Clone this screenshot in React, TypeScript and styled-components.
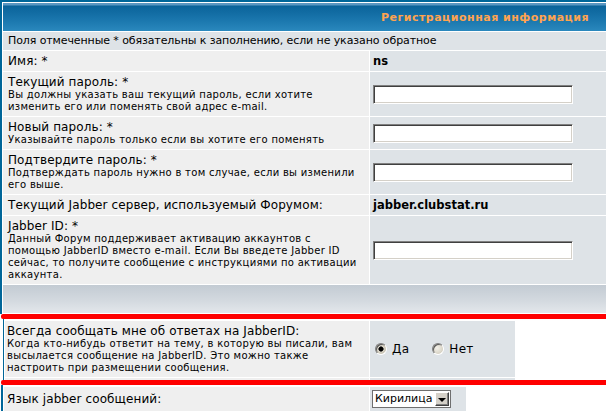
import styled, { createGlobalStyle } from 'styled-components';

const GlobalStyle = createGlobalStyle`
  html, body {
    margin: 0;
    padding: 0;
    background: #ffffff;
  }
  body {
    font-family: "DejaVu Sans", Verdana, sans-serif;
    color: #000000;
    overflow: hidden;
  }
`;

const Page = styled.div`
  width: 606px;
  height: 412px;
  overflow: hidden;
`;

const MainTable = styled.div`
  display: grid;
  grid-template-columns: 366px 1fr;
  gap: 1px;
  width: 970px;
  box-sizing: border-box;
  border: 2px solid #006699;
  border-bottom: 0;
  padding: 1px;
  background: #ffffff;
`;

interface StripProps {
  $cols: string;
  $edge: number;
  $offset: number;
}

const StripTable = styled.div<StripProps>`
  display: grid;
  grid-template-columns: ${p => p.$cols};
  gap: 1px;
  width: max-content;
  margin-left: ${p => p.$offset}px;
  border-left: ${p => p.$edge}px solid #006699;
  padding: 2px 0 0 1px;
  background: #ffffff;
`;

const Head = styled.div`
  grid-column: 1 / -1;
  height: 28px;
  display: flex;
  align-items: center;
  justify-content: center;
  padding-top: 1px;
  box-sizing: border-box;
  background: linear-gradient(to bottom, #5a97c2 0px, #5a97c2 2px, #0a639a 3px, #1a76ad 60%, #2a88bd 100%);
  color: #ffa34f;
  font-size: 11px;
  font-weight: bold;
  letter-spacing: 0.5px;
`;

interface CellProps {
  $tone: 'row1' | 'row2';
  $wide?: boolean;
  $pad?: string;
}

const Cell = styled.div<CellProps>`
  grid-column: ${p => (p.$wide ? '1 / -1' : 'auto')};
  display: flex;
  flex-direction: column;
  justify-content: center;
  padding: ${p => p.$pad || '3px'};
  background: ${p => (p.$tone === 'row1' ? '#efefef' : '#dee3e7')};
`;

const Peek = styled.div<{ $tone: 'row1' | 'row2' }>`
  height: 2px;
  background: ${p => (p.$tone === 'row1' ? '#efefef' : '#dee3e7')};
`;

const CatBottom = styled.div`
  grid-column: 1 / -1;
  height: 28px;
  background: linear-gradient(to bottom, #c3cbd3 0%, #d3d9df 55%, #e3e7eb 100%);
`;

const Label = styled.span`
  font-size: 12px;
  line-height: 14px;
  letter-spacing: 0.1px;
  white-space: nowrap;
`;

const Note = styled.span`
  font-size: 11px;
  line-height: 12px;
  letter-spacing: -0.1px;
  white-space: nowrap;
`;

const Explain = styled.span`
  display: block;
  font-size: 10px;
  line-height: 12px;
  letter-spacing: 0.3px;
  white-space: nowrap;
`;

const Value = styled.b`
  font-size: 11.5px;
  line-height: 14px;
  font-weight: bold;
`;

const TextInput = styled.input.attrs({ type: 'text' })`
  width: 200px;
  height: 19px;
  box-sizing: border-box;
  margin: 0;
  padding: 1px 3px;
  font: 12px "DejaVu Sans", Verdana, sans-serif;
  background: #ffffff;
  border: 1px solid;
  border-color: #808080 #ffffff #ffffff #808080;
  box-shadow: inset 1px 1px 0 #404040, inset -1px -1px 0 #d4d0c8;
  outline: none;
`;

const Marker = styled.div`
  width: 605px;
  height: 5px;
  margin-left: 1px;
  background: #ff0000;
  border-radius: 2px 0 0 2px;
`;

const RadioGroup = styled.div`
  display: flex;
  align-items: center;
  gap: 21px;
`;

const RadioOption = styled.label`
  display: flex;
  align-items: center;
  font-size: 12px;
  line-height: 14px;
  letter-spacing: 0.3px;
`;

const Radio = styled.input.attrs({ type: 'radio' })`
  appearance: none;
  width: 12px;
  height: 12px;
  margin: 0 5px 0 2px;
  border-radius: 50%;
  border: 1px solid;
  border-color: #808080 #ffffff #ffffff #808080;
  box-sizing: border-box;
  background: radial-gradient(circle at 40% 40%, #f3f1ea 0, #dcd8cb 60%, #bcb7a6 100%);
  box-shadow: inset 1px 1px 0 #5a5a5a;

  &:checked {
    background:
      radial-gradient(circle at 50% 50%, #000000 0, #000000 1.8px, #3a3a3a 2.4px, transparent 2.9px),
      radial-gradient(circle at 40% 40%, #e9e6dd 0, #cfcabb 60%, #aea999 100%);
  }
`;

const SelectBox = styled.div`
  display: inline-flex;
  align-items: stretch;
  width: 79px;
  height: 18px;
  box-sizing: border-box;
  border: 1px solid #6f6f6f;
  background: #ffffff;
  padding: 1px;
`;

const Select = styled.select`
  appearance: none;
  flex: 1;
  min-width: 0;
  border: 0;
  margin: 0;
  padding: 0 0 0 1px;
  background: transparent;
  font: 11px "DejaVu Sans", Verdana, sans-serif;
  line-height: 14px;
  color: #000000;
  outline: none;
`;

const SelectButton = styled.span`
  width: 14px;
  box-sizing: border-box;
  display: flex;
  align-items: center;
  justify-content: center;
  background: #d4d0c8;
  border: 1px solid;
  border-color: #ffffff #404040 #404040 #ffffff;
  box-shadow: inset -1px -1px 0 #808080;

  &::after {
    content: '';
    border-left: 4px solid transparent;
    border-right: 4px solid transparent;
    border-top: 4px solid #000000;
    margin-top: 1px;
  }
`;

export default function App() {
  return (
    <Page>
      <GlobalStyle />
      <MainTable>
        <Head>Регистрационная информация</Head>
        <Cell $tone="row2" $wide $pad="3px 3px 3px 5px">
          <Note>Поля отмеченные * обязательны к заполнению, если не указано обратное</Note>
        </Cell>

        <Cell $tone="row1" $pad="3px 3px 3px 5px">
          <Label>Имя: *</Label>
        </Cell>
        <Cell $tone="row2">
          <Value>ns</Value>
        </Cell>

        <Cell $tone="row1" $pad="3px 3px 3px 5px">
          <Label>Текущий пароль: *</Label>
          <Explain>Вы должны указать ваш текущий пароль, если хотите</Explain>
          <Explain>изменить его или поменять свой адрес e-mail.</Explain>
        </Cell>
        <Cell $tone="row2">
          <TextInput />
        </Cell>

        <Cell $tone="row1" $pad="3px 3px 3px 5px">
          <Label>Новый пароль: *</Label>
          <Explain>Указывайте пароль только если вы хотите его поменять</Explain>
        </Cell>
        <Cell $tone="row2">
          <TextInput />
        </Cell>

        <Cell $tone="row1" $pad="3px 3px 3px 5px">
          <Label>Подтвердите пароль: *</Label>
          <Explain>Подтверждать пароль нужно в том случае, если вы изменили</Explain>
          <Explain>его выше.</Explain>
        </Cell>
        <Cell $tone="row2">
          <TextInput />
        </Cell>

        <Cell $tone="row1" $pad="3px 3px 3px 5px">
          <Label>Текущий Jabber сервер, используемый Форумом:</Label>
        </Cell>
        <Cell $tone="row2">
          <Value>jabber.clubstat.ru</Value>
        </Cell>

        <Cell $tone="row1" $pad="3px 3px 3px 5px">
          <Label>Jabber ID: *</Label>
          <Explain>Данный Форум поддерживает активацию аккаунтов с</Explain>
          <Explain>помощью JabberID вместо e-mail. Если Вы введете Jabber ID</Explain>
          <Explain>сейчас, то получите сообщение с инструкциями по активации</Explain>
          <Explain>аккаунта.</Explain>
        </Cell>
        <Cell $tone="row2">
          <TextInput />
        </Cell>

        <CatBottom />
      </MainTable>

      <Marker />

      <StripTable $cols="364px 145px" $edge={1} $offset={3}>
        <Cell $tone="row1" $pad="3px 3px 3px 2px">
          <Label>Всегда сообщать мне об ответах на JabberID:</Label>
          <Explain>Когда кто-нибудь ответит на тему, в которую вы писали, вам</Explain>
          <Explain>высылается сообщение на JabberID. Это можно также</Explain>
          <Explain>настроить при размещении сообщения.</Explain>
        </Cell>
        <Cell $tone="row2">
          <RadioGroup>
            <RadioOption>
              <Radio name="notify" defaultChecked />
              Да
            </RadioOption>
            <RadioOption>
              <Radio name="notify" />
              Нет
            </RadioOption>
          </RadioGroup>
        </Cell>
        <Peek $tone="row1" />
        <Peek $tone="row2" />
      </StripTable>

      <Marker />

      <StripTable $cols="365px 96px" $edge={2} $offset={1}>
        <Cell $tone="row1" $pad="3px 3px 3px 3px">
          <Label>Язык jabber сообщений:</Label>
        </Cell>
        <Cell $tone="row2" $pad="3px 2px">
          <SelectBox>
            <Select defaultValue="cp1251">
              <option value="cp1251">Кирилица</option>
              <option value="utf8">UTF-8</option>
            </Select>
            <SelectButton />
          </SelectBox>
        </Cell>
      </StripTable>
    </Page>
  );
}
